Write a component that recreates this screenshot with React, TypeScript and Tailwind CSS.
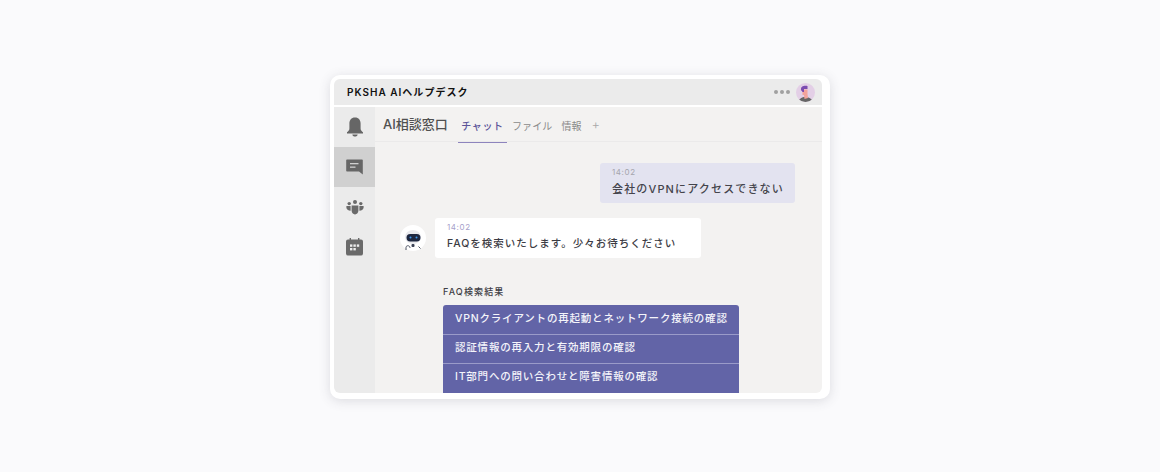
// react
import React from "react";

const faqItems = [
  "VPNクライアントの再起動とネットワーク接続の確認",
  "認証情報の再入力と有効期限の確認",
  "IT部門への問い合わせと障害情報の確認",
];

function Bell() {
  return (
    <svg width="18" height="20" viewBox="0 0 18 20" fill="#666666">
      <path d="M9 0.5C5.2 0.5 3.4 3.2 3.4 6.5V11.5C3.4 13.2 2.4 14.2 1 15.2V16.5H17V15.2C15.6 14.2 14.6 13.2 14.6 11.5V6.5C14.6 3.2 12.8 0.5 9 0.5Z" />
      <path d="M6.3 17.4H11.7C11.4 18.8 10.4 19.6 9 19.6C7.6 19.6 6.6 18.8 6.3 17.4Z" />
    </svg>
  );
}

function ChatIcon() {
  return (
    <svg width="17" height="16" viewBox="0 0 17 16">
      <path d="M1 0.5H16A0.8 0.8 0 0 1 16.8 1.3V15.5L13 12.5H1A0.8 0.8 0 0 1 0.2 11.7V1.3A0.8 0.8 0 0 1 1 0.5Z" fill="#666666" />
      <rect x="4" y="4" width="8.5" height="1.3" fill="#d0d0d0" />
      <rect x="4" y="7.5" width="5.5" height="1.3" fill="#d0d0d0" />
    </svg>
  );
}

function TeamIcon() {
  return (
    <svg width="18" height="15" viewBox="0 0 18 15" fill="#6a6a6a">
      <circle cx="9" cy="2" r="2" />
      <circle cx="3.2" cy="3.6" r="1.7" />
      <circle cx="14.8" cy="3.6" r="1.7" />
      <path d="M5.6 5.4H12.4V10.5C12.4 12.8 11 14.4 9 14.4C7 14.4 5.6 12.8 5.6 10.5Z" />
      <path d="M0.4 6H4.6V10.8C2.2 10.8 0.4 9.6 0.4 7.6Z" />
      <path d="M17.6 6H13.4V10.8C15.8 10.8 17.6 9.6 17.6 7.6Z" />
    </svg>
  );
}

function CalendarIcon() {
  return (
    <svg width="17" height="18" viewBox="0 0 17 18">
      <path d="M2 1.5H15A2 2 0 0 1 17 3.5V15.5A2 2 0 0 1 15 17.5H2A2 2 0 0 1 0 15.5V3.5A2 2 0 0 1 2 1.5Z" fill="#6a6a6a" />
      <rect x="3.6" y="0" width="1.4" height="3" fill="#6a6a6a" />
      <rect x="12" y="0" width="1.4" height="3" fill="#6a6a6a" />
      <g fill="#ececec">
        <rect x="4" y="6.4" width="2.4" height="2.4" />
        <rect x="7.4" y="6.4" width="2.4" height="2.4" />
        <rect x="10.8" y="6.4" width="2.4" height="2.4" />
        <rect x="4" y="10" width="2.4" height="2.4" />
        <rect x="7.4" y="10" width="2.4" height="2.4" />
      </g>
    </svg>
  );
}

function UserAvatar() {
  return (
    <svg width="19" height="19" viewBox="0 0 19 19">
      <clipPath id="avatarClip">
        <circle cx="9.5" cy="9.5" r="9.5" />
      </clipPath>
      <g clipPath="url(#avatarClip)">
        <rect width="19" height="19" fill="#e3cfe6" />
        <path d="M2.5 19C3 15.5 6 14 9 14C13 14 16 15.5 16.5 19Z" fill="#666666" />
        <path d="M6.5 6.5H11.5V11L12 15L8.5 16L8 12H6.5Z" fill="#f3a39b" />
        <path d="M5 7C4.6 3.6 7.4 2.4 11.5 3V6H8V9H6.6C6.2 8 5.4 8 5 7Z" fill="#7b4bb0" />
      </g>
    </svg>
  );
}

function BotAvatar() {
  return (
    <svg width="26" height="26" viewBox="0 0 26 26">
      <circle cx="13" cy="13" r="13" fill="#ffffff" />
      <ellipse cx="13" cy="12" rx="8" ry="7" fill="#e9eaee" />
      <rect x="6.5" y="9" width="14" height="7.5" rx="3.7" fill="#1d2740" />
      <circle cx="10.5" cy="12.4" r="1" fill="#3d9bf0" />
      <circle cx="16.5" cy="12.4" r="1" fill="#3d9bf0" />
      <rect x="11.5" y="19" width="3" height="3" rx="1" fill="#3a4154" />
      <path d="M6 25V22.5C6 21 7.5 20.5 8.5 20.8C9.5 21 10 22 10 23" fill="none" stroke="#4a5060" strokeWidth="1" />
      <path d="M18.5 21.5L20.5 23.5" fill="none" stroke="#4a5060" strokeWidth="1" />
    </svg>
  );
}

export default function App() {
  return (
    <div
      className="h-[472px] w-[1160px] overflow-hidden bg-[#fafafc] pt-[75px] pl-[330px] text-[#3f3f46]"
      style={{ fontFamily: '"Inter", "Noto Sans CJK JP", sans-serif' }}
    >
      <div className="flex h-[324px] w-[500px] flex-col rounded-[10px] bg-white pt-1 pr-2 pb-1.5 pl-1 shadow-[0_2px_12px_rgba(60,60,80,0.16)]">
        {/* title bar */}
        <header className="flex h-[26px] shrink-0 items-center justify-between rounded-t-[6px] bg-[#ebebeb] pr-[7px] pl-[13px]">
          <span className="text-[10px] font-semibold tracking-[1.02px] text-[#111111]">
            PKSHA AIヘルプデスク
          </span>
          <div className="flex items-center gap-[6px]">
            <div className="flex gap-[2px]">
              <span className="size-1 rounded-full bg-[#a0a0a0]" />
              <span className="size-1 rounded-full bg-[#a0a0a0]" />
              <span className="size-1 rounded-full bg-[#a0a0a0]" />
            </div>
            <UserAvatar />
          </div>
        </header>

        <div className="mt-0.5 flex min-h-0 flex-1 overflow-hidden rounded-b-[6px]">
          {/* sidebar */}
          <aside className="flex w-[41px] shrink-0 flex-col bg-[#ebebeb]">
            <div className="flex h-10 items-center justify-center"><Bell /></div>
            <div className="flex h-10 items-center justify-center bg-[#d0d0d0]"><ChatIcon /></div>
            <div className="flex h-10 items-center justify-center"><TeamIcon /></div>
            <div className="flex h-10 items-center justify-center"><CalendarIcon /></div>
          </aside>

          <main className="flex min-w-0 flex-1 flex-col bg-[#f3f2f1]">
            {/* channel tabs */}
            <div className="flex h-[35px] shrink-0 items-stretch border-b border-[#ebeaea] pl-2">
              <h1 className="mr-[10px] flex h-[35px] w-[65px] items-center text-[13px] font-medium leading-none whitespace-nowrap text-[#505050]">
                AI相談窓口
              </h1>
              <div className="flex h-[36px] w-[49px] items-center justify-center border-b-[1.5px] border-[#8d84bd] pt-1 text-[10px] font-medium tracking-[0.6px] text-[#5b5499]">
                チャット
              </div>
              <div className="ml-[5px] flex items-center pt-1 text-[10px] tracking-[0.1px] text-[#8a8a8a]">ファイル</div>
              <div className="ml-[9px] flex items-center pt-1 text-[10px] tracking-[0.1px] text-[#8a8a8a]">情報</div>
              <div className="ml-[10px] flex items-center pt-0.5 text-[13px] font-light text-[#a8a8a8]">+</div>
            </div>

            {/* messages */}
            <div className="flex min-h-0 flex-1 flex-col overflow-hidden pt-[21px]">
              <div className="flex justify-end pr-[27px]">
                <div className="flex h-10 w-[195px] flex-col rounded-[3px] bg-[#e3e3f0] pt-1 pl-3">
                  <span className="text-[8px] leading-[11px] tracking-[0.6px] text-[#a5a5ad]">14:02</span>
                  <span className="mt-[3.5px] text-[11px] leading-[15px] font-medium tracking-[1.15px] text-[#44444c]">
                    会社のVPNにアクセスできない
                  </span>
                </div>
              </div>

              <div className="mt-[15px] flex items-center pl-[25px]">
                <BotAvatar />
                <div className="ml-[9px] flex h-10 w-[266px] flex-col rounded-[3px] bg-white pt-1 pl-3">
                  <span className="text-[8px] leading-[11px] tracking-[0.6px] text-[#a79fcb]">14:02</span>
                  <span className="mt-[2.5px] text-[10.5px] leading-[15px] font-medium tracking-[1px] text-[#3c3c44]">
                    FAQを検索いたします。少々お待ちください
                  </span>
                </div>
              </div>

              <div className="mt-[27px] ml-[68px] w-[296px]">
                <div className="text-[9px] leading-[14px] font-medium tracking-[1.15px] text-[#3f3f46]">FAQ検索結果</div>
                <ul className="mt-[6px] overflow-hidden rounded-t-[3px] bg-[#6264a7] pb-1">
                  {faqItems.map((item, i) => (
                    <li
                      key={i}
                      className={
                        "flex h-[29px] items-center pl-3 text-[10.5px] font-medium tracking-[0.8px] whitespace-nowrap text-[#f4f4fa] " +
                        (i > 0 ? "border-t border-[#9a9bc9] pb-0.5" : "pb-0.5")
                      }
                    >
                      {item}
                    </li>
                  ))}
                </ul>
              </div>
            </div>
          </main>
        </div>
      </div>
    </div>
  );
}
